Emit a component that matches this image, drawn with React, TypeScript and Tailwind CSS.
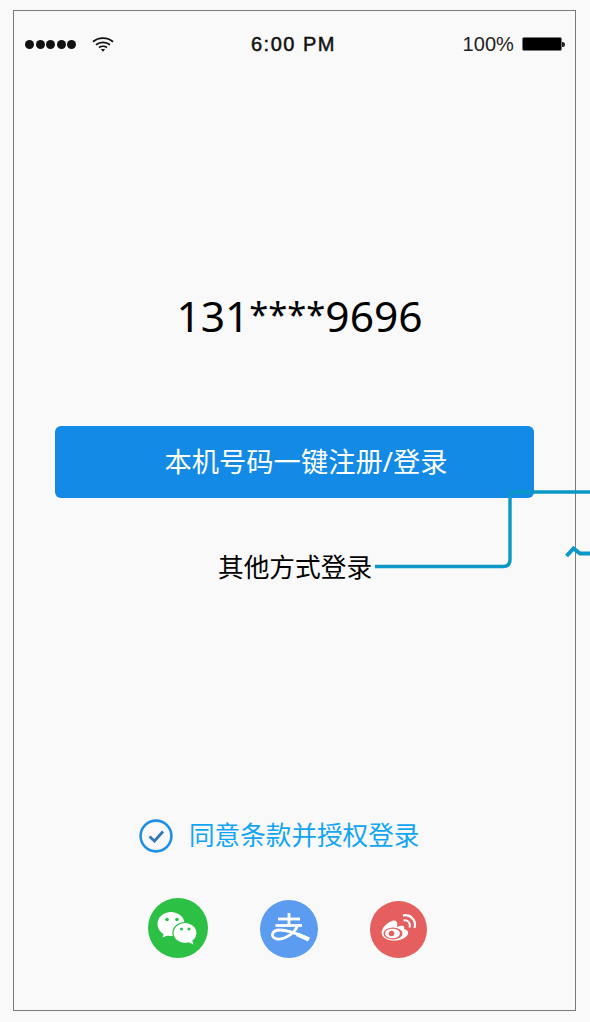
import React from "react";

const cjk = "font-['Noto_Sans','Noto_Sans_CJK_SC',sans-serif]";

function Wifi() {
  return (
    <svg width="22" height="15" viewBox="0 0 22 15" className="block">
      <path d="M1 4.8 C6.5 0 15.5 0 21 4.8" fill="none" stroke="#111" strokeWidth="1.8" />
      <path d="M4 7.8 C8 4.6 14 4.6 18 7.8" fill="none" stroke="#111" strokeWidth="1.8" />
      <path d="M7 10.6 C9.2 9 12.8 9 15 10.6" fill="none" stroke="#111" strokeWidth="1.8" />
      <path d="M8.8 12 L13.2 12 L11 14.8 Z" fill="#111" />
    </svg>
  );
}

function StatusBar() {
  return (
    <div className="relative flex h-[16px] items-center justify-between pl-[11px] pr-[10px] font-['Liberation_Sans',sans-serif] text-[#111]">
      <div className="flex items-center gap-[16px]">
        <div className="flex gap-[1.5px]">
          {[0, 1, 2, 3, 4].map((i) => (
            <span key={i} className="h-[9px] w-[9px] rounded-full bg-[#111]" />
          ))}
        </div>
        <Wifi />
      </div>
      <div className="absolute left-[237px] top-0 text-[20px] font-medium leading-[16px] tracking-[1.5px] [-webkit-text-stroke:0.5px_#111]">6:00 PM</div>
      <div className="flex items-center gap-[8px]">
        <span className="text-[20px] leading-[16px] tracking-[0.1px] text-[#222]">100%</span>
        <div className="flex items-center">
          <div className="h-[14px] w-[40px] rounded-[2px] border border-[#777] bg-[#000]" />
          <div className="h-[5px] w-[3px] rounded-r-full bg-[#222]" />
        </div>
      </div>
    </div>
  );
}

function WeChat() {
  return (
    <svg width="60" height="60" viewBox="0 0 60 60" className="block">
      <circle cx="30" cy="30" r="30" fill="#2cc145" />
      <ellipse cx="23" cy="26" rx="13.5" ry="12" fill="#fff" />
      <path d="M16 35 L14.5 39.5 L22 36.5 Z" fill="#fff" />
      <circle cx="19" cy="21.5" r="1.8" fill="#2cc145" />
      <circle cx="29" cy="21.5" r="1.8" fill="#2cc145" />
      <ellipse cx="37" cy="35" rx="12" ry="10.5" fill="#fff" stroke="#2cc145" strokeWidth="1.2" />
      <path d="M40 44 L45.5 46.5 L44 42 Z" fill="#fff" />
      <circle cx="33.5" cy="31" r="1.5" fill="#2cc145" />
      <circle cx="41" cy="31" r="1.5" fill="#2cc145" />
    </svg>
  );
}

function Alipay() {
  return (
    <svg width="58" height="58" viewBox="0 0 58 58" className="block">
      <circle cx="29" cy="29" r="29" fill="#5b9bf0" />
      <g fill="none" stroke="#fff" strokeWidth="2.8">
        <path d="M18 19 H40" />
        <path d="M29 13 V25" />
        <path d="M15.5 25.5 H42" />
        <path d="M37.5 26 C34 34 24 40 17 39 C10 38 11 30 20 30 C28 30 38 34 46 37.5" />
      </g>
      <path d="M38 32.8 L50 37.5 L48 41.5 L36 36 Z" fill="#fff" />
    </svg>
  );
}

function Weibo() {
  return (
    <svg width="57" height="57" viewBox="0 0 57 57" className="block">
      <circle cx="28.5" cy="28.5" r="28.5" fill="#e65f5f" />
      <path d="M22 20 C14 23 10.5 30 12 33.5 C13.5 38 20 40 26 39.5 C33 39 39 35 38 31 C37.5 29 35 28 34 28 C35 25 33 24 30 25 C28 25.5 27 26 27 26 C28 21 26 18.5 22 20 Z" fill="#fff" />
      <ellipse cx="23" cy="32.5" rx="9.5" ry="6" fill="#e65f5f" />
      <ellipse cx="22.5" cy="32.5" rx="7.5" ry="4.8" fill="#fff" />
      <circle cx="21.5" cy="32.5" r="2.8" fill="#e65f5f" />
      <path d="M33 14.5 C40 13 47 19 44.5 27" fill="none" stroke="#fff" strokeWidth="2.2" />
      <path d="M33.5 19.5 C37.5 18.5 41 22 39.5 26.5" fill="none" stroke="#fff" strokeWidth="2" />
    </svg>
  );
}

function Connector() {
  return (
    <svg width="590" height="1022" viewBox="0 0 590 1022" className="pointer-events-none absolute left-0 top-0" fill="none">
      <path d="M375 566.5 H503 Q510 566.5 510 559.5 V499 Q510 492 517 492 H590" stroke="#0b98c6" strokeWidth="3.4" />
      <path d="M566.5 556 L573.5 548.5 L580 553.5 H590" stroke="#0b98c6" strokeWidth="4" />
    </svg>
  );
}

export default function App() {
  return (
    <div className={`relative h-[1022px] w-[590px] overflow-hidden bg-[#f9f9f9] ${cjk}`}>
      <div className="ml-[13px] mt-[10px] flex h-[1001px] w-[563px] flex-col border border-[#7a7a7a]">
        <div className="pt-[25px]">
          <StatusBar />
        </div>
        <div className="mt-[234px] h-[60px] pl-[10px] text-center text-[42.5px] leading-[60px] text-black">
          131<span className="relative top-[-5px] text-[34.5px] leading-[0]">****</span>9696
        </div>
        <div className="ml-[41px] mt-[80px] flex h-[72px] w-[479px] items-center justify-center rounded-[6px] bg-[#128ae6] pl-[23px] text-[27.3px] text-white">
          本机号码一键注册/登录
        </div>
        <div className="ml-[204px] mt-[53px] text-[25.7px] leading-[34px] text-black">其他方式登录</div>
        <div className="ml-[125px] mt-[234px] flex items-center gap-[16px]">
          <svg width="34" height="34" viewBox="0 0 34 34" className="block">
            <circle cx="17" cy="17" r="15.4" fill="none" stroke="#1e90e6" strokeWidth="2.6" />
            <path d="M10.5 17.5 L15.5 22 L24 12.5" fill="none" stroke="#3577b5" strokeWidth="2.8" />
          </svg>
          <span className="text-[25.6px] leading-[34px] text-[#12a5f4]">同意条款并授权登录</span>
        </div>
        <div className="relative ml-[134px] mt-[45px] flex items-start">
          <WeChat />
          <div className="ml-[52px] mt-[2px]"><Alipay /></div>
          <div className="ml-[52px] mt-[3px]"><Weibo /></div>
        </div>
      </div>
      <Connector />
    </div>
  );
}
